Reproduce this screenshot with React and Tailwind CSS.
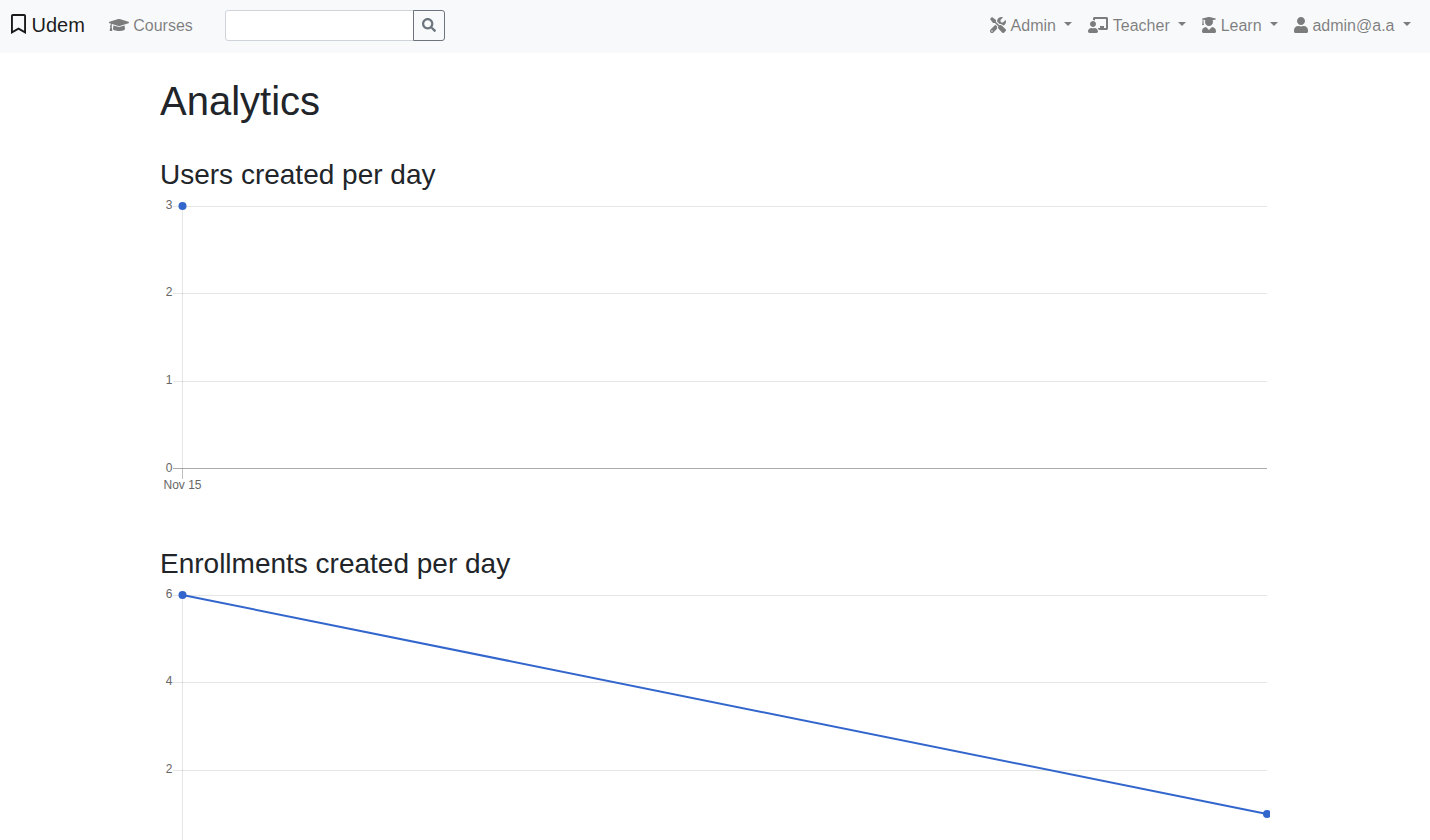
import React from "react";
import {
  FaRegBookmark,
  FaGraduationCap,
  FaSearch,
  FaTools,
  FaChalkboardTeacher,
  FaUserGraduate,
  FaUser,
} from "react-icons/fa";

function NavItem({ icon, label, dropdown }) {
  return (
    <a className="flex items-center px-2 text-black/50">
      <span className="mb-[2px]">{icon}</span>
      <span className="ml-[4.4px]">{label}</span>
      {dropdown && (
        <span className="mb-[3px] ml-[8.5px] border-x-[4.8px] border-t-[4.8px] border-x-transparent border-t-current" />
      )}
    </a>
  );
}

function Navbar() {
  return (
    <nav className="flex h-[53px] shrink-0 items-center bg-[#f8f9fa] pr-[11px] pl-[11px] pb-[2px]">
      <a className="mr-4 flex items-center pb-[2px] text-[20px] leading-[30px] text-black/90">
        <FaRegBookmark className="mb-[2px] h-5 w-[15px]" />
        <span className="ml-[5.5px]">Udem</span>
      </a>
      <NavItem icon={<FaGraduationCap className="h-4 w-5" />} label="Courses" />
      <form className="ml-[24px] flex h-[31px]">
        <input
          type="text"
          className="w-[189px] rounded-l-[3px] border border-[#ced4da] bg-white px-2 outline-none"
        />
        <button
          type="button"
          className="-ml-px flex w-8 items-center justify-center rounded-r-[3px] border border-[#6c757d] pb-[2px] text-[#6c757d]"
        >
          <FaSearch className="h-[14px] w-[14px]" />
        </button>
      </form>
      <div className="ml-auto flex">
        <NavItem dropdown icon={<FaTools className="h-4 w-4" />} label="Admin" />
        <NavItem dropdown icon={<FaChalkboardTeacher className="h-4 w-5" />} label="Teacher" />
        <NavItem dropdown icon={<FaUserGraduate className="h-4 w-[14px]" />} label="Learn" />
        <NavItem dropdown icon={<FaUser className="h-4 w-[14px]" />} label="admin@a.a" />
      </div>
    </nav>
  );
}

const ROWS = [6.5, 93.5, 181.5, 268.5];
const BASELINES = [9, 96, 184, 272];

function LineChart({ ticks, points, xLabel }) {
  return (
    <svg
      width="1110"
      height="308"
      viewBox="0 -8 1110 308"
      className="block overflow-hidden font-[Helvetica,'Liberation_Sans',Arial,sans-serif]"
    >
      <path d="M22.5 6V269" stroke="#000" strokeOpacity="0.1" />
      {ROWS.map((y, i) => (
        <g key={y}>
          <path d={`M13 ${y}H1107`} stroke="#000" strokeOpacity="0.1" />
          <text x="12.5" y={BASELINES[i]} textAnchor="end" className="fill-[#666] text-[12px]">
            {ticks[i]}
          </text>
        </g>
      ))}
      <path d="M13 268.5H1107M22.5 269V279" stroke="#000" strokeOpacity="0.25" />
      <text x="22.5" y="289" textAnchor="middle" className="fill-[#666] text-[12px]">
        {xLabel}
      </text>
      <polyline
        points={points.map((p) => p.join(",")).join(" ")}
        fill="none"
        stroke="#3366cc"
        strokeWidth="2"
      />
      {points.map(([x, y]) => (
        <circle key={x} cx={x} cy={y} r="4" fill="#3366cc" />
      ))}
    </svg>
  );
}

function ChartSection({ title, ...chart }) {
  return (
    <section className="h-[389px]">
      <h3 className="text-[28px] leading-[34px] font-medium">{title}</h3>
      <LineChart {...chart} />
    </section>
  );
}

export default function App() {
  return (
    <div className="flex h-screen flex-col overflow-hidden bg-white font-['Liberation_Sans',Arial,sans-serif] text-[16px] leading-6 text-[#212529]">
      <Navbar />
      <main className="mx-auto w-[1110px] pt-6">
        <h1 className="mb-[33px] text-[40px] leading-[48px] font-medium">Analytics</h1>
        <ChartSection
          title="Users created per day"
          ticks={[3, 2, 1, 0]}
          points={[[22.5, 6]]}
          xLabel="Nov 15"
        />
        <ChartSection
          title="Enrollments created per day"
          ticks={[6, 4, 2, 0]}
          points={[
            [22.5, 6],
            [1107, 225],
          ]}
          xLabel="Nov 15"
        />
      </main>
    </div>
  );
}
